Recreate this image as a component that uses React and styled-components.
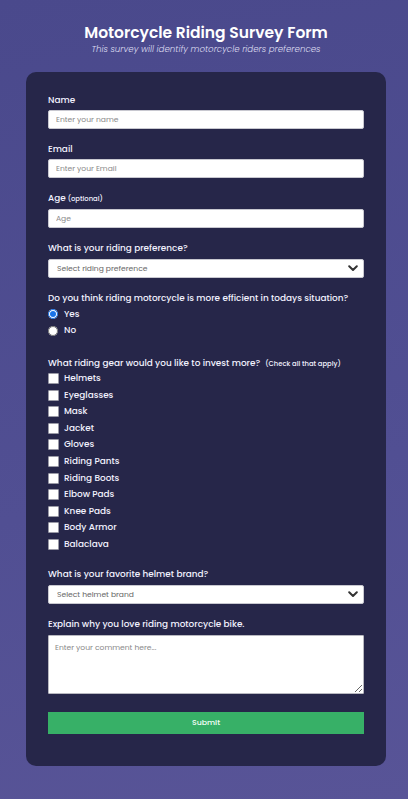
import React from 'react'
import styled, { createGlobalStyle } from 'styled-components'

const FONT = '"Poppins", "Noto Sans", "Open Sans", sans-serif'

const GlobalStyle = createGlobalStyle`
  * { box-sizing: border-box; }
  html, body {
    margin: 0;
    padding: 0;
  }
  body {
    min-height: 100vh;
    font-family: ${FONT};
    background: linear-gradient(170deg, #4a498c 0%, #514f93 60%, #585497 100%);
    color: #f2f2ff;
  }
`

const Page = styled.div`
  min-height: 100vh;
  padding: 23px 0 33px 4px;
  display: flex;
  flex-direction: column;
  align-items: center;
`

const Header = styled.header`
  text-align: center;
  margin-bottom: 17px;
`

const Title = styled.h1`
  margin: 0;
  font-size: 15.5px;
  line-height: 20px;
  font-weight: 600;
  color: #ffffff;
`

const Subtitle = styled.p`
  margin: 0;
  font-size: 8.7px;
  line-height: 12px;
  font-style: italic;
  font-weight: 300;
  color: #dcdcf0;
`

const Card = styled.form`
  width: 360px;
  background: #262649;
  border-radius: 10px;
  padding: 22px 22px 32px 22px;
`

const Group = styled.div`
  margin-bottom: ${p => p.$mb ?? 14}px;
`

const Label = styled.label`
  display: block;
  font-size: 8.9px;
  line-height: 12px;
  font-weight: 500;
  color: #f2f2ff;
  margin-bottom: ${p => p.$mb ?? 4}px;
`

const Small = styled.span`
  font-size: 6.8px;
  margin-left: ${p => p.$ml || 2}px;
`

const Input = styled.input`
  display: block;
  width: 100%;
  height: 19px;
  border: 1px solid #c8c8d0;
  border-radius: 2px;
  background: #fff;
  padding: 0 7px;
  font-family: ${FONT};
  font-size: 7.6px;
  color: #333;
  outline: none;

  &::placeholder { color: #8a8a8a; }
`

const SelectWrap = styled.div`
  position: relative;
`

const Select = styled.select`
  display: block;
  width: 100%;
  height: 19px;
  appearance: none;
  border: 1px solid #c8c8d0;
  border-radius: 2px;
  background: #fff;
  padding: 0 8px;
  font-family: ${FONT};
  font-size: 7.6px;
  color: #666;
  outline: none;
`

const Chevron = styled.svg`
  position: absolute;
  right: 6px;
  top: 6px;
  width: 10px;
  height: 7px;
  pointer-events: none;
`

const Option = styled.label`
  display: flex;
  align-items: center;
  gap: ${p => p.$gap || 6}px;
  height: 16.6px;
  font-size: 8.9px;
  font-weight: 500;
  color: #f2f2ff;
`

const Radio = styled.input`
  margin: 0;
  width: 10px;
  height: 10px;
  accent-color: #1a73e8;
`

const Check = styled.input`
  margin: 0;
  width: 11px;
  height: 11px;
  appearance: none;
  background: #fff;
  border: 1px solid #9a9aa6;
  border-radius: 1px;
`

const TextArea = styled.textarea`
  display: block;
  width: 100%;
  height: 59px;
  border: 1px solid #b8b8c0;
  border-radius: 1px;
  background: #fff;
  padding: 6px 6px;
  font-family: ${FONT};
  font-size: 7.6px;
  color: #333;
  resize: vertical;
  outline: none;

  &::placeholder { color: #8a8a8a; }
`

const Submit = styled.button`
  display: block;
  width: 100%;
  height: 22px;
  margin-top: 18px;
  border: none;
  border-radius: 0;
  background: #37b067;
  color: #f4fff8;
  font-family: ${FONT};
  font-size: 7.8px;
  font-weight: 500;
`

const gear = [
  'Helmets', 'Eyeglasses', 'Mask', 'Jacket', 'Gloves', 'Riding Pants',
  'Riding Boots', 'Elbow Pads', 'Knee Pads', 'Body Armor', 'Balaclava',
]

function Arrow() {
  return (
    <Chevron viewBox="0 0 10 7">
      <path d="M1.2 1.3 L5 5 L8.8 1.3" fill="none" stroke="#333" strokeWidth="2" strokeLinecap="round" strokeLinejoin="round" />
    </Chevron>
  )
}

export default function App() {
  return (
    <>
      <GlobalStyle />
      <Page>
        <Header>
          <Title>Motorcycle Riding Survey Form</Title>
          <Subtitle>This survey will identify motorcycle riders preferences</Subtitle>
        </Header>

        <Card onSubmit={e => e.preventDefault()}>
          <Group>
            <Label htmlFor="name">Name</Label>
            <Input id="name" type="text" placeholder="Enter your name" />
          </Group>
          <Group>
            <Label htmlFor="email">Email</Label>
            <Input id="email" type="email" placeholder="Enter your Email" />
          </Group>
          <Group>
            <Label htmlFor="age">Age<Small>(optional)</Small></Label>
            <Input id="age" type="number" placeholder="Age" />
          </Group>
          <Group>
            <Label htmlFor="pref" $mb={5}>What is your riding preference?</Label>
            <SelectWrap>
              <Select id="pref" defaultValue="">
                <option value="" disabled>Select riding preference</option>
                <option>Sport</option>
                <option>Touring</option>
                <option>Cruiser</option>
              </Select>
              <Arrow />
            </SelectWrap>
          </Group>
          <Group $mb={18}>
            <Label $mb={2}>Do you think riding motorcycle is more efficient in todays situation?</Label>
            <Option $gap={6}>
              <Radio type="radio" name="eff" defaultChecked />Yes
            </Option>
            <Option $gap={6}>
              <Radio type="radio" name="eff" />No
            </Option>
          </Group>
          <Group $mb={15}>
            <Label $mb={0}>What riding gear would you like to invest more?<Small $ml={5}>(Check all that apply)</Small></Label>
            {gear.map(item => (
              <Option key={item} $gap={5}>
                <Check type="checkbox" />{item}
              </Option>
            ))}
          </Group>
          <Group $mb={14}>
            <Label htmlFor="brand" $mb={5}>What is your favorite helmet brand?</Label>
            <SelectWrap>
              <Select id="brand" defaultValue="">
                <option value="" disabled>Select helmet brand</option>
                <option>Shoei</option>
                <option>Arai</option>
                <option>AGV</option>
              </Select>
              <Arrow />
            </SelectWrap>
          </Group>
          <Group $mb={0}>
            <Label htmlFor="why" $mb={5}>Explain why you love riding motorcycle bike.</Label>
            <TextArea id="why" placeholder="Enter your comment here..." />
          </Group>
          <Submit type="submit">Submit</Submit>
        </Card>
      </Page>
    </>
  )
}
